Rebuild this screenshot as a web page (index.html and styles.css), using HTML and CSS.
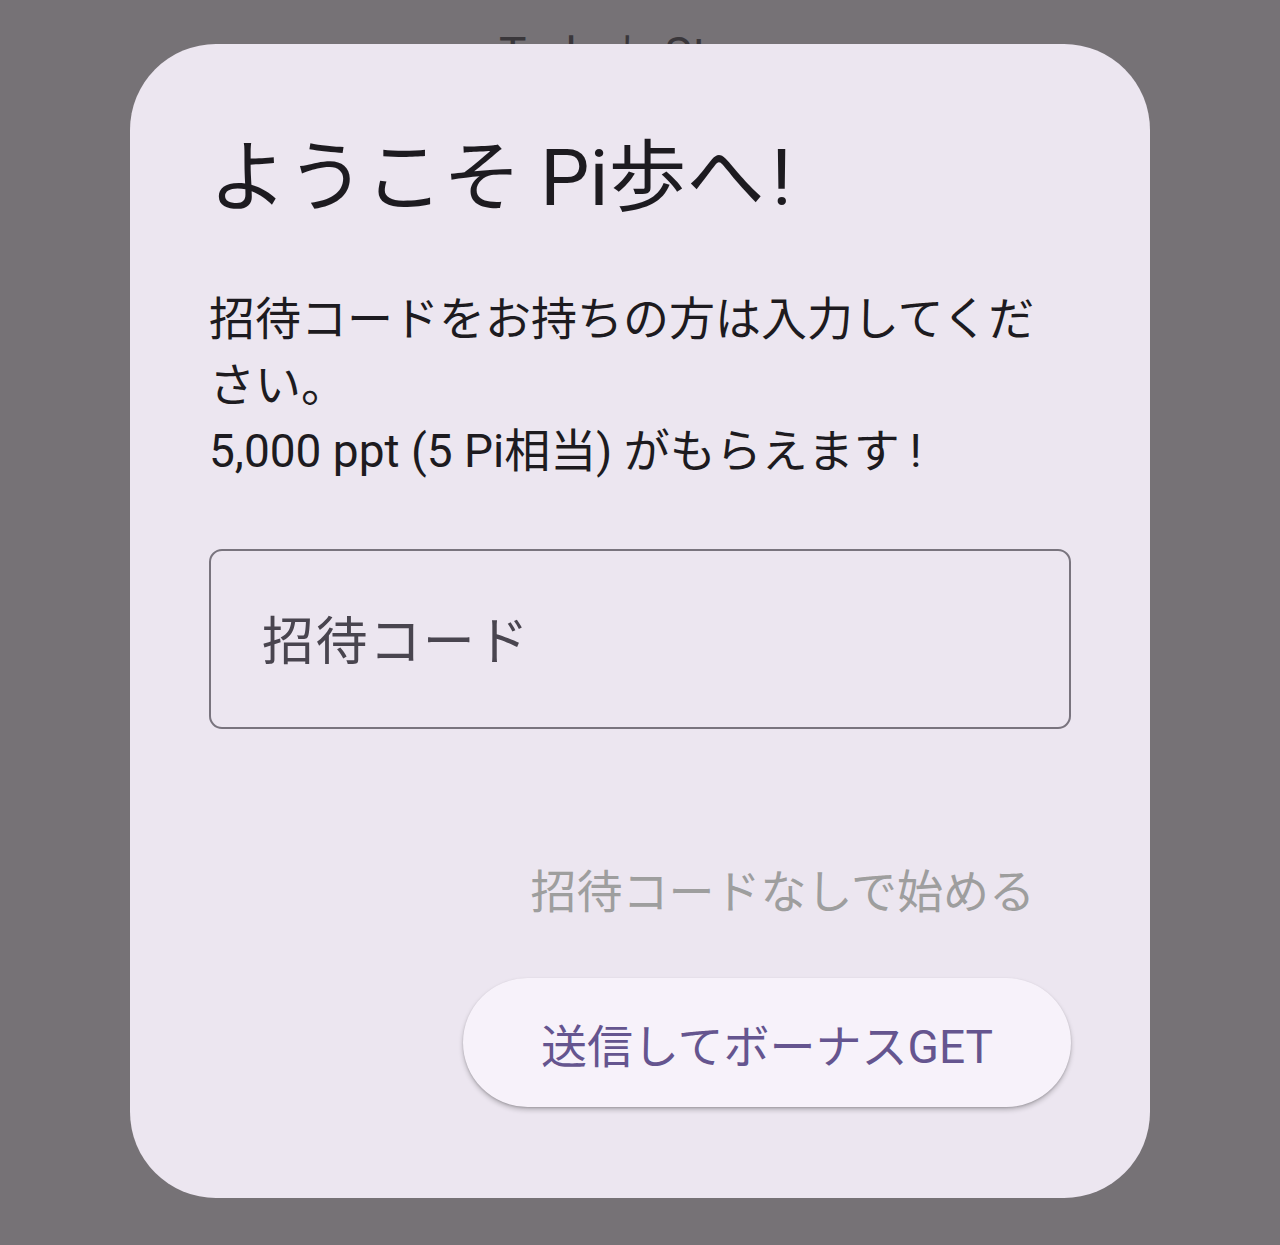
FILE: index.html
```html
<!DOCTYPE html>
<html lang="ja">
<head>
    <meta charset="UTF-8">
    <meta name="viewport" content="width=device-width, initial-scale=1.0">
    <title>Pi歩 - 招待コード</title>
    <link rel="stylesheet" href="styles.css">
</head>
<body>
    <div class="screen">
        <p class="screen-title">Today's Steps</p>
    </div>

    <div class="dialog" role="dialog">
        <h1 class="dialog-title">ようこそ Pi歩へ<span class="excl">!</span></h1>
        <p class="dialog-text">
            招待コードをお持ちの方は入力してください。<br>
            5,000 ppt (5 Pi相当) がもらえます<span class="excl">!</span>
        </p>
        <div class="field">
            <input type="text" placeholder="招待コード">
        </div>
        <div class="actions">
            <button class="text-btn">招待コードなしで始める</button>
            <button class="elevated-btn">送信してボーナスGET</button>
        </div>
    </div>
</body>
</html>
```

FILE: styles.css
```css
body {
    margin: 0;
    padding: 0;
    height: 1245px;
    overflow: hidden;
    background: #767276;
    font-family: Roboto, "Noto Sans CJK JP", sans-serif;
}

.screen {
    text-align: center;
}

.screen-title {
    margin: 0;
    padding-top: 29px;
    font-size: 46px;
    line-height: 50px;
    color: #3a373b;
}

.dialog {
    position: absolute;
    top: 44px;
    left: 130px;
    width: 1020px;
    height: 1154px;
    box-sizing: border-box;
    padding: 82px 79px 79px;
    border-radius: 86px;
    background: #ece6f0;
    display: flex;
    flex-direction: column;
}

.dialog-title {
    margin: 0;
    font-size: 78px;
    font-weight: 400;
    line-height: 105px;
    color: #1d1b20;
}

.dialog-title .excl {
    margin-left: 7px;
}

.dialog-text {
    margin: 55px 0 0 0;
    font-size: 46px;
    line-height: 66px;
    color: #1d1b20;
}

.dialog-text .excl {
    margin-left: 10px;
}

.field {
    margin-top: 65px;
    height: 180px;
    box-sizing: border-box;
    border: 2.5px solid #79747e;
    border-radius: 13px;
    display: flex;
    align-items: center;
    padding: 0 51px;
}

.field input {
    width: 100%;
    margin-top: 6px;
    border: none;
    outline: none;
    background: transparent;
    font-family: inherit;
    font-size: 52px;
    letter-spacing: 1.6px;
    color: #1d1b20;
    padding: 0;
}

.field input::placeholder {
    color: #49454f;
}

.actions {
    margin-top: 93px;
    display: flex;
    flex-direction: column;
    align-items: flex-end;
    gap: 24px;
}

.actions button {
    border: none;
    font-family: inherit;
    font-size: 46px;
    cursor: pointer;
    height: 132px;
}

.text-btn {
    background: transparent;
    color: #9e9e9e;
    padding: 0 36px;
}

.actions .elevated-btn {
    height: 129px;
    background: #f7f2fa;
    color: #65558f;
    padding: 0 78px;
    border-radius: 65px;
    box-shadow: 0 3px 5px rgba(0, 0, 0, 0.22), 0 1px 2px rgba(0, 0, 0, 0.15);
}
```
